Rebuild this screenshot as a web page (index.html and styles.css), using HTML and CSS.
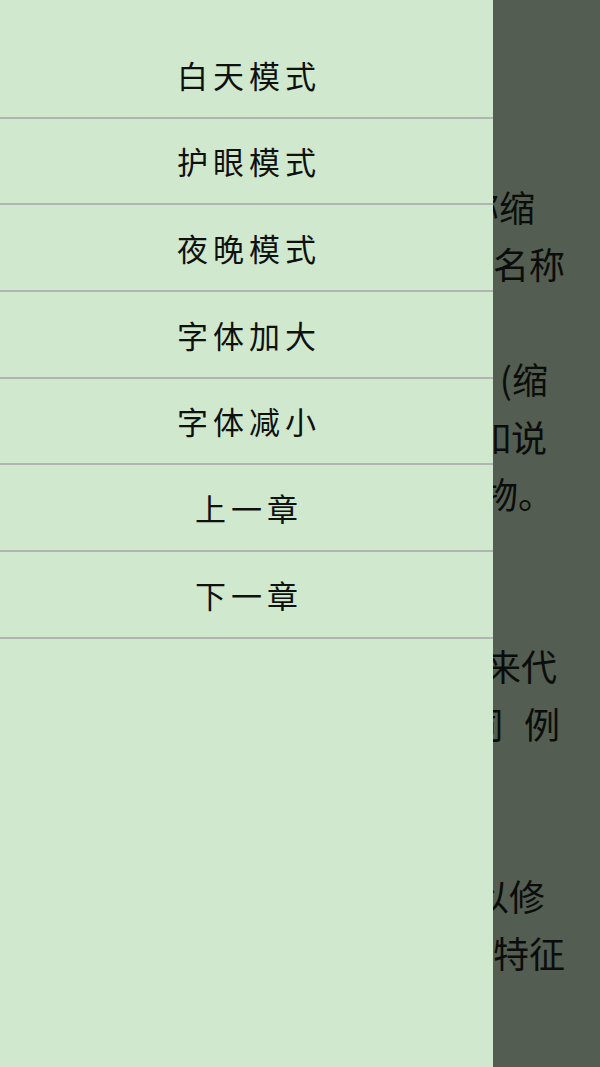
FILE: index.html
```html
<!DOCTYPE html>
<html lang="zh-CN">
<head>
<meta charset="utf-8">
<title>阅读</title>
<link rel="stylesheet" href="styles.css">
</head>
<body>
<div class="screen">
  <div class="reader">
    <div class="ln r65">简称缩</div>
    <div class="ln r35">名称</div>
    <div class="ln"></div>
    <div class="ln r52">简称 (缩</div>
    <div class="ln r53">如说</div>
    <div class="ln r46">人物。</div>
    <div class="ln"></div>
    <div class="ln"></div>
    <div class="ln r43">来代</div>
    <div class="ln r40">词<span class="gap"></span>例</div>
    <div class="ln"></div>
    <div class="ln"></div>
    <div class="ln r55">以修</div>
    <div class="ln r35">特征</div>
  </div>
  <nav class="drawer">
    <div class="item">白天模式</div>
    <div class="item">护眼模式</div>
    <div class="item">夜晚模式</div>
    <div class="item">字体加大</div>
    <div class="item">字体减小</div>
    <div class="item">上一章</div>
    <div class="item">下一章</div>
  </nav>
</div>
</body>
</html>
```

FILE: styles.css
```css
html, body {
  margin: 0;
  padding: 0;
}
body {
  width: 600px;
  height: 1067px;
  overflow: hidden;
  font-family: "Noto Sans CJK SC", "Noto Sans", sans-serif;
}
.screen {
  position: relative;
  width: 600px;
  height: 1067px;
  overflow: hidden;
  background: #535d51;
}
.reader {
  padding-top: 178px;
  font-size: 36px;
  line-height: 57.4px;
  color: #0b0d0b;
}
.ln {
  height: 57.4px;
  white-space: nowrap;
  text-align: right;
}
.gap { display: inline-block; width: 21px; }
.r65 { padding-right: 65px; }
.r35 { padding-right: 35px; }
.r52 { padding-right: 52px; }
.r53 { padding-right: 53px; }
.r46 { padding-right: 46px; }
.r43 { padding-right: 43px; }
.r40 { padding-right: 40px; }
.r55 { padding-right: 55px; }
.drawer {
  position: absolute;
  left: 0;
  top: 0;
  width: 493px;
  height: 1067px;
  background: #cfe8ce;
  padding-top: 32px;
  box-sizing: border-box;
}
.item {
  height: 86.67px;
  box-sizing: border-box;
  border-bottom: 2px solid #b2b4b1;
  display: flex;
  align-items: center;
  justify-content: center;
  font-size: 31px;
  letter-spacing: 5px;
  text-indent: 5px;
  color: #0f110f;
}
```
